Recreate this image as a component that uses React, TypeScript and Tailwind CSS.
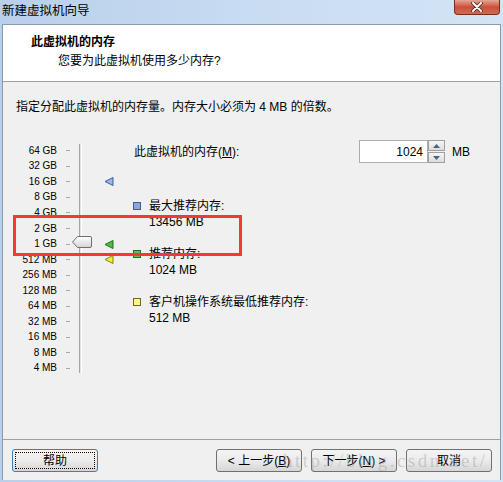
import React from "react";

const FONT = "font-['Liberation_Sans','Noto_Sans_CJK_SC',sans-serif]";

const sizes = [
  "64 GB", "32 GB", "16 GB", "8 GB", "4 GB", "2 GB", "1 GB",
  "512 MB", "256 MB", "128 MB", "64 MB", "32 MB", "16 MB", "8 MB", "4 MB",
];

// marker triangles next to the slider, keyed by row
const markers: Record<number, { fill: string; stroke: string }> = {
  2: { fill: "#9db6e4", stroke: "#3d5c9c" },
  6: { fill: "#49c23d", stroke: "#1f6f1a" },
  7: { fill: "#f2ee3c", stroke: "#86800c" },
};

function Marker({ fill, stroke }: { fill: string; stroke: string }) {
  return (
    <svg width="10" height="9" viewBox="0 0 10 9">
      <path d="M9 0.5 L1 4.5 L9 8.5 Z" fill={fill} stroke={stroke} strokeWidth="1" strokeLinejoin="round" />
    </svg>
  );
}

function Swatch({ fill, stroke }: { fill: string; stroke: string }) {
  return (
    <div className="mt-[4px] h-[8px] w-[8px] shrink-0 border" style={{ background: fill, borderColor: stroke }} />
  );
}

function Button({ children, focused }: { children: React.ReactNode; focused?: boolean }) {
  return (
    <button
      className={`flex h-[23px] w-[86px] items-center justify-center rounded-[3px] border bg-gradient-to-b from-[#f4f4f4] via-[#ebebeb] to-[#d6d6d6] text-[12px] text-black ${
        focused
          ? "border-[#3c7fb1] outline-1 outline-offset-[-4px] outline-dotted outline-black"
          : "border-[#707070]"
      }`}
    >
      {children}
    </button>
  );
}

export default function App() {
  return (
    <div className={`relative flex h-[482px] w-[503px] flex-col overflow-hidden bg-gradient-to-r from-[#b8d0ea] via-[#c8dcf2] to-[#d3e4f6] ${FONT} text-black`}>
      {/* Title bar */}
      <div className="flex h-[24px] shrink-0 items-start">
        <div className="pl-[2px] pt-[3px] text-[12.5px] leading-[16px]">新建虚拟机向导</div>
        <div className="ml-auto mr-[3px] flex h-[15px] w-[46px] items-center justify-center rounded-b-[4px] border border-t-0 border-[#7c2a1e] bg-gradient-to-b from-[#e5a595] via-[#c9503a] to-[#d36a4e]">
          <svg width="12" height="10" viewBox="0 0 12 10">
            <path d="M2 1 L10 9 M10 1 L2 9" stroke="#4a2a22" strokeWidth="3.6" strokeLinecap="round" />
            <path d="M2 1 L10 9 M10 1 L2 9" stroke="#ffffff" strokeWidth="2" strokeLinecap="round" />
          </svg>
        </div>
      </div>

      {/* Window body */}
      <div className="mx-[2px] mb-[2px] flex flex-1 flex-col border border-b-0 border-[#8a9aae] bg-[#f0f0f0]">
        {/* Header */}
        <div className="h-[57px] shrink-0 border-b border-[#a0a0a0] bg-white">
          <div className="pl-[28px] pt-[9px] text-[12px] font-bold leading-[16px]">此虚拟机的内存</div>
          <div className="mt-[3px] pl-[55px] text-[12px] leading-[16px]">您要为此虚拟机使用多少内存?</div>
        </div>

        {/* Content */}
        <div className="flex-1">
          <div className="pl-[13px] pt-[17px] text-[12px] leading-[16px]">
            指定分配此虚拟机的内存量。内存大小必须为 4 MB 的倍数。
          </div>

          <div className="mt-[25px] flex">
            {/* Slider */}
            <div className="relative pt-[3px]">
              {sizes.map((s, i) => (
                <div key={s} className="flex h-[15.55px] items-center">
                  <div className="w-[54px] text-right text-[10px] leading-[12px]">{s}</div>
                  <div className="ml-[9px] h-px w-[4px] bg-[#a8a8a8]" />
                  <div className="ml-[34px] flex w-[10px] items-center">
                    {markers[i] && <Marker {...markers[i]} />}
                  </div>
                </div>
              ))}
              {/* track */}
              <div className="absolute left-[76px] top-[4px] h-[229px] w-[3px] border-l border-[#a4a4a4] border-r border-r-white bg-[#e2e2e2]" />
              {/* thumb */}
              <svg className="absolute left-[69px] top-[96px]" width="20" height="12" viewBox="0 0 20 12">
                <defs>
                  <linearGradient id="thumb" x1="0" y1="0" x2="0" y2="1">
                    <stop offset="0" stopColor="#ffffff" />
                    <stop offset="1" stopColor="#d4d4d4" />
                  </linearGradient>
                </defs>
                <path d="M0.5 6 L5.5 0.5 H18 Q19.5 0.5 19.5 2 V10 Q19.5 11.5 18 11.5 H5.5 Z" fill="url(#thumb)" stroke="#6e6e6e" />
              </svg>
            </div>

            {/* Right panel */}
            <div className="ml-[18px] flex flex-col text-[12px]">
              <div className="flex h-[23px] items-center">
                <div className="w-[227px] pl-[2px]">
                  此虚拟机的内存(<span className="underline">M</span>):
                </div>
                <div className="flex h-[23px] w-[69px] items-center justify-end border border-[#abadb3] bg-white pr-[4px]">
                  1024
                </div>
                <div className="flex h-[23px] w-[17px] flex-col">
                  <div className="flex h-[11px] items-center justify-center border border-[#a0a0a0] bg-gradient-to-b from-[#f6f6f6] to-[#dcdcdc]">
                    <svg width="7" height="4" viewBox="0 0 7 4"><path d="M0 4 L3.5 0 L7 4 Z" fill="#4d6185" /></svg>
                  </div>
                  <div className="mt-px flex h-[11px] items-center justify-center border border-[#a0a0a0] bg-gradient-to-b from-[#f6f6f6] to-[#dcdcdc]">
                    <svg width="7" height="4" viewBox="0 0 7 4"><path d="M0 0 L3.5 4 L7 0 Z" fill="#4d6185" /></svg>
                  </div>
                </div>
                <div className="ml-[7px]">MB</div>
              </div>

              <div className="mt-[35px] flex flex-col gap-[16px] leading-[16px]">
                <div className="flex pl-px">
                  <Swatch fill="#8ea6d6" stroke="#3d5c9c" />
                  <div className="ml-[8px]">
                    <div>最大推荐内存:</div>
                    <div>13456 MB</div>
                  </div>
                </div>
                <div className="flex pl-px">
                  <Swatch fill="#58c64c" stroke="#2a6a22" />
                  <div className="ml-[8px]">
                    <div>推荐内存:</div>
                    <div>1024 MB</div>
                  </div>
                </div>
                <div className="flex pl-px">
                  <Swatch fill="#fbf68a" stroke="#6e6a1a" />
                  <div className="ml-[8px]">
                    <div>客户机操作系统最低推荐内存:</div>
                    <div>512 MB</div>
                  </div>
                </div>
              </div>
            </div>
          </div>
        </div>

        {/* Buttons */}
        <div className="flex h-[41px] shrink-0 items-start border-t border-[#a0a0a0] pl-[9px] pr-[8px] pt-[9px]">
          <Button focused>帮助</Button>
          <div className="ml-auto flex gap-[9px]">
            <Button>&lt; 上一步(<span className="underline">B</span>)</Button>
            <Button>下一步(<span className="underline">N</span>) &gt;</Button>
            <Button>取消</Button>
          </div>
        </div>
      </div>

      {/* Watermark */}
      <div className="pointer-events-none absolute left-[283px] top-[449px] font-['Liberation_Serif',serif] text-[19px] leading-[24px] tracking-[2.5px] text-[rgba(150,150,150,0.4)]">
        http://blog.csdn.net/
      </div>

      {/* Red annotation box */}
      <div className="pointer-events-none absolute left-[13px] top-[215px] h-[41px] w-[229px] border-[3px] border-[#f0393b]" />
    </div>
  );
}
